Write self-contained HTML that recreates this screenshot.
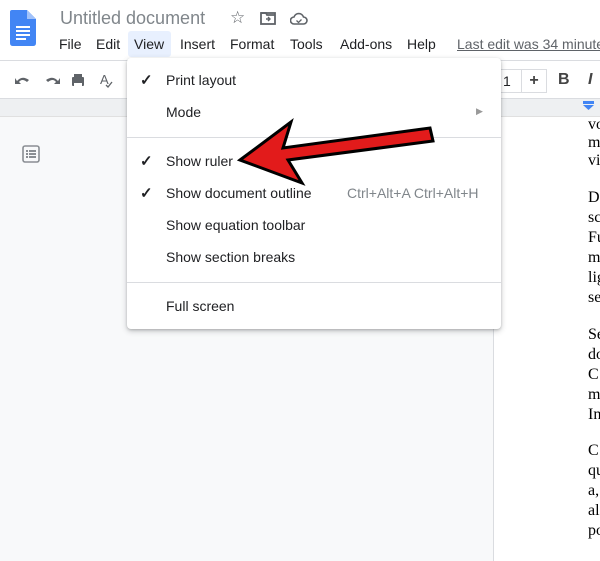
<!DOCTYPE html>
<html><head><meta charset="utf-8"><style>
*{margin:0;padding:0;box-sizing:border-box}
html,body{width:600px;height:561px;overflow:hidden}
body{background:#f8f9fa;font-family:"Liberation Sans",Arial,sans-serif;position:relative;color:#202124}
.a{position:absolute;white-space:nowrap}
.top{position:absolute;left:0;top:0;width:600px;height:61px;background:#fff;border-bottom:1px solid #dadce0}
.tb{position:absolute;left:0;top:61px;width:600px;height:38px;background:#fff;border-bottom:1px solid #dadce0}
.ruler{position:absolute;left:0;top:99px;width:600px;height:18px;background:#eef0f2;border-bottom:1px solid #e0e0e0}
.page{position:absolute;left:493px;top:117px;width:107px;height:444px;background:#fff;border-left:1px solid #dadce0}
.menu{position:absolute;left:127px;top:58px;width:374px;height:271px;background:#fff;border-radius:4px;box-shadow:0 2px 6px rgba(60,64,67,.3),0 1px 2px rgba(60,64,67,.2)}
.mi{position:absolute;left:39px;font-size:14px;color:#202124}
.ck{position:absolute;left:13px;font-size:15px;font-weight:bold}
.sep{position:absolute;left:0;width:374px;height:1px;background:#dadce0}
.mb{font-size:14px;top:36px}
.doc{font-family:"Liberation Serif",serif;font-size:16px;color:#000;left:588px}
</style></head><body>
<div class="top"></div>
<svg class="a" style="left:10px;top:10px" width="26" height="36" viewBox="0 0 26 36"><path d="M2 0H17L26 9V33Q26 36 23 36H3Q0 36 0 33V2Q0 0 2 0Z" fill="#4285f4"/><path d="M17 0V9H26Z" fill="#a1c2fa"/><rect x="6" y="16" width="14" height="2" fill="#fff"/><rect x="6" y="20" width="14" height="2" fill="#fff"/><rect x="6" y="24" width="14" height="2" fill="#fff"/><rect x="6" y="28" width="10" height="2" fill="#fff"/></svg>
<div class="a" style="left:60px;top:8px;font-size:18px;color:#80868b">Untitled document</div>
<div class="a" style="left:230px;top:8px;font-size:17px;color:#5f6368">☆</div>
<svg class="a" style="left:260px;top:11px" width="16" height="14"><rect x="1" y="2" width="14" height="11" fill="none" stroke="#5f6368" stroke-width="1.8"/><path d="M1 2h5l1 2h8" stroke="#5f6368" stroke-width="1.8" fill="none"/><path d="M6 8h4M8 6l2 2-2 2" stroke="#5f6368" stroke-width="1.4" fill="none"/></svg>
<svg class="a" style="left:290px;top:12px" width="18" height="13"><path d="M4 12a3.5 3.5 0 0 1 0-7a5 5 0 0 1 9.5 0a3.5 3.5 0 0 1 0 7Z" fill="none" stroke="#5f6368" stroke-width="1.6"/><path d="M6.5 8.5l2 2 3-3" fill="none" stroke="#5f6368" stroke-width="1.3"/></svg>
<div class="a" style="left:128px;top:31px;width:43px;height:26px;background:#e8f0fe;border-radius:3px"></div>
<div class="a mb" style="left:59px">File</div>
<div class="a mb" style="left:96px">Edit</div>
<div class="a mb" style="left:134px">View</div>
<div class="a mb" style="left:180px">Insert</div>
<div class="a mb" style="left:230px">Format</div>
<div class="a mb" style="left:290px">Tools</div>
<div class="a mb" style="left:340px">Add-ons</div>
<div class="a mb" style="left:407px">Help</div>
<div class="a mb" style="left:457px;width:143px;overflow:hidden;color:#5f6368;text-decoration:underline">Last edit was 34 minutes ago</div>
<div class="tb"></div>
<svg class="a" style="left:14px;top:73px" width="110" height="16" fill="#5f6368"><path d="M3 8Q8 2 15 7L13 9Q8 5 5 9L7 11H1V5Z"/><path d="M44 8Q39 2 32 7L34 9Q39 5 42 9L40 11H46V5Z"/><rect x="58" y="4" width="12" height="9" rx="1"/><rect x="60" y="1" width="8" height="3"/><rect x="60" y="10" width="8" height="5" fill="#fff"/><text x="86" y="11" font-size="13" font-family="Liberation Sans" fill="#5f6368">A</text><path d="M92 12l2 2 4-5" stroke="#5f6368" fill="none" stroke-width="1.3"/></svg>
<div class="a" style="left:500px;top:69px;width:22px;height:24px;border:1px solid #dadce0;border-right:none;font-size:14px;padding:3px 0 0 2px;color:#202124">1</div>
<div class="a" style="left:521px;top:69px;width:26px;height:24px;border:1px solid #dadce0;font-size:16px;text-align:center;padding-top:2px;font-weight:bold;color:#444">+</div>
<div class="a" style="left:558px;top:71px;font-size:16px;font-weight:bold;color:#444">B</div>
<div class="a" style="left:588px;top:71px;font-size:16px;font-style:italic;font-weight:bold;color:#444">I</div>
<div class="ruler"></div>
<svg class="a" style="left:582px;top:101px" width="14" height="10"><rect x="1" y="0" width="11" height="3" fill="#4285f4"/><path d="M1 4h11l-5.5 5Z" fill="#4285f4"/></svg>
<div class="page"></div>
<svg class="a" style="left:22px;top:145px" width="18" height="18"><rect x="1" y="1" width="16" height="16" rx="2" fill="none" stroke="#8a8e93" stroke-width="1.6"/><g fill="#8a8e93"><rect x="4" y="5" width="2" height="2"/><rect x="7" y="5" width="7" height="2"/><rect x="4" y="8" width="2" height="2"/><rect x="7" y="8" width="7" height="2"/><rect x="4" y="11" width="2" height="2"/><rect x="7" y="11" width="7" height="2"/></g></svg>
<div style="position:absolute;left:0;top:0;width:600px;height:561px;overflow:hidden">
<div class="a doc" style="top:116px">vo</div>
<div class="a doc" style="top:134px">m</div>
<div class="a doc" style="top:152px">vi</div>
<div class="a doc" style="top:189px">D</div>
<div class="a doc" style="top:209px">sc</div>
<div class="a doc" style="top:229px">Fu</div>
<div class="a doc" style="top:249px">m</div>
<div class="a doc" style="top:269px">lig</div>
<div class="a doc" style="top:289px">se</div>
<div class="a doc" style="top:326px">Se</div>
<div class="a doc" style="top:346px">do</div>
<div class="a doc" style="top:366px">C</div>
<div class="a doc" style="top:386px">m</div>
<div class="a doc" style="top:406px">In</div>
<div class="a doc" style="top:442px">C</div>
<div class="a doc" style="top:462px">qu</div>
<div class="a doc" style="top:482px">a,</div>
<div class="a doc" style="top:502px">al</div>
<div class="a doc" style="top:522px">po</div>
</div>
<div class="menu">
<div class="ck" style="top:13px">✓</div><div class="mi" style="top:14px">Print layout</div>
<div class="mi" style="top:46px">Mode</div><div class="a" style="left:349px;top:48px;font-size:9px;color:#999">▶</div>
<div class="sep" style="top:79px"></div>
<div class="ck" style="top:94px">✓</div><div class="mi" style="top:95px">Show ruler</div>
<div class="ck" style="top:126px">✓</div><div class="mi" style="top:127px">Show document outline</div>
<div class="a" style="left:220px;top:127px;font-size:14px;color:#80868b">Ctrl+Alt+A Ctrl+Alt+H</div>
<div class="mi" style="top:159px">Show equation toolbar</div>
<div class="mi" style="top:191px">Show section breaks</div>
<div class="sep" style="top:224px"></div>
<div class="mi" style="top:240px">Full screen</div>
</div>
<svg class="a" style="left:0;top:0" width="600" height="561"><polygon points="240,160 291,122 283,148 430,128 433,141 288,160 302,183" fill="#e21b1b" stroke="#000" stroke-width="3" stroke-linejoin="miter"/></svg>
</body></html>
